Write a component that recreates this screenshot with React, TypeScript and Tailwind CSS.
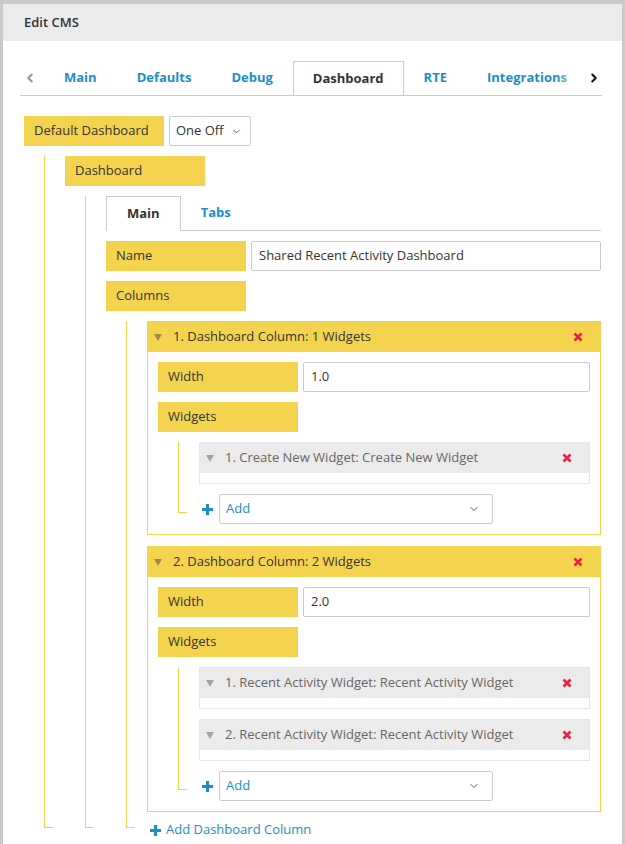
import { ChevronDown, ChevronLeft, ChevronRight } from "lucide-react";
import type { ReactNode } from "react";

const tabs = ["Main", "Defaults", "Debug", "Dashboard", "RTE", "Integrations"];

function Label({ children }: { children: ReactNode }) {
  return (
    <div className="flex h-[30px] w-[140px] shrink-0 items-center bg-[#f4d44f] px-[10px] text-[13px] text-[#333]">
      {children}
    </div>
  );
}

function Branch({ children, last = 12 }: { children: ReactNode; last?: number }) {
  return (
    <div className="mt-[10px] flex">
      <div
        className={
          "ml-[20px] w-[9px] shrink-0 border-b border-l border-[#f4d44f] " +
          (last === 11 ? "mb-[11px]" : "mb-[12px]")
        }
      />
      <div className="ml-[12px] flex min-w-0 flex-1 flex-col">{children}</div>
    </div>
  );
}

function Triangle({ color }: { color: string }) {
  return (
    <svg width="8" height="7" viewBox="0 0 8 7" className="shrink-0">
      <path d="M0 0 H8 L4 7 Z" fill={color} />
    </svg>
  );
}

function RedX() {
  return (
    <svg width="10" height="10" viewBox="0 0 10 10" className="shrink-0">
      <path d="M1.5 1.5 L8.5 8.5 M8.5 1.5 L1.5 8.5" stroke="#ea2143" strokeWidth="2.6" strokeLinecap="butt" />
    </svg>
  );
}

function Plus() {
  return (
    <svg width="11" height="11" viewBox="0 0 11 11" className="ml-[3px] shrink-0">
      <path d="M5.5 0 V11 M0 5.5 H11" stroke="#1e8ec6" strokeWidth="3" />
    </svg>
  );
}

function Input({ value }: { value: string }) {
  return (
    <div className="ml-[5px] flex h-[30px] flex-1 items-center rounded-[2px] border border-[#ccc] bg-white px-[7px] text-[13px] text-[#333]">
      {value}
    </div>
  );
}

function Widget({ title }: { title: string }) {
  return (
    <div className="mb-[10px] border border-[#e6e6e6]">
      <div className="flex h-[30px] items-center bg-[#ebebeb] pl-[6px] pr-[17px] text-[13px] text-[#666]">
        <Triangle color="#a3a3a3" />
        <span className="ml-[11px] flex-1">{title}</span>
        <RedX />
      </div>
      <div className="h-[10px] bg-white" />
    </div>
  );
}

function AddRow() {
  return (
    <div className="flex items-center">
      <Plus />
      <div className="ml-[6px] flex h-[30px] w-[274px] items-center justify-between rounded-[2px] border border-[#ccc] bg-white pl-[6px] pr-[12px] text-[13px] text-[#1e8ec6]">
        <span>Add</span>
        <ChevronDown size={12} strokeWidth={2} className="text-[#555]" />
      </div>
    </div>
  );
}

function Column({ n, width, widgets }: { n: number; width: string; widgets: string[] }) {
  return (
    <div className="mb-[11px] border border-[#f4d44f]">
      <div className="flex h-[30px] items-center bg-[#f4d44f] pl-[6px] pr-[17px] text-[13px] text-[#333]">
        <Triangle color="#9e8d48" />
        <span className="ml-[11px] flex-1">
          {n}. Dashboard Column: {widgets.length} Widgets
        </span>
        <RedX />
      </div>
      <div className="flex flex-col px-[10px] pb-[10px] pt-[10px]">
        <div className="flex">
          <Label>Width</Label>
          <Input value={width} />
        </div>
        <div className="mt-[10px]">
          <Label>Widgets</Label>
        </div>
        <Branch last={11}>
          {widgets.map((w, i) => (
            <Widget key={i} title={`${i + 1}. ${w}`} />
          ))}
          <AddRow />
        </Branch>
      </div>
    </div>
  );
}

export default function App() {
  return (
    <div className="min-h-screen bg-[#c9c9c9] px-[3px] pt-[4px] font-['Open_Sans',sans-serif]">
      <div className="min-h-[840px] bg-white">
        <div className="flex h-[37px] items-center bg-[#ebebeb] px-[21px] text-[13px] font-semibold text-[#333]">
          Edit CMS
        </div>
        <div className="pl-[17px] pr-[20px] pt-[20px]">
          <div className="flex h-[35px] items-stretch border-b border-[#ccc]">
            <div className="flex w-[24px] shrink-0 items-center justify-center pr-[4px]">
              <ChevronLeft size={14} strokeWidth={3.5} className="text-[#999]" />
            </div>
            <div className="relative flex min-w-0 flex-1 overflow-hidden">
              {tabs.map((t) =>
                t === "Dashboard" ? (
                  <div
                    key={t}
                    className="-mb-px flex shrink-0 items-center border border-b-0 border-[#ccc] bg-white px-[19px] text-[13px] font-bold text-[#333]"
                  >
                    {t}
                  </div>
                ) : (
                  <div
                    key={t}
                    className="flex shrink-0 items-center border border-transparent px-[19px] text-[13px] font-bold text-[#1e8ec6]"
                  >
                    {t}
                  </div>
                )
              )}
              <div className="absolute bottom-0 right-0 top-0 w-[30px] bg-gradient-to-r from-transparent to-white" />
            </div>
            <div className="flex w-[16px] shrink-0 items-center justify-center">
              <ChevronRight size={14} strokeWidth={3.5} className="text-[#111]" />
            </div>
          </div>

          <div className="ml-[4px] mr-[1px] mt-[20px] flex flex-col">
            <div className="flex">
              <Label>Default Dashboard</Label>
              <div className="ml-[5px] flex h-[30px] w-[82px] items-center justify-between rounded-[2px] border border-[#ccc] bg-white pl-[6px] pr-[8px] text-[13px] text-[#333]">
                <span>One Off</span>
                <ChevronDown size={11} strokeWidth={2} className="text-[#555]" />
              </div>
            </div>
            <Branch>
              <Label>Dashboard</Label>
              <Branch>
                <div className="flex h-[35px] border-b border-[#ccc]">
                  <div className="-mb-px flex items-center border border-b-0 border-[#ccc] bg-white px-[20px] text-[13px] font-bold text-[#333]">
                    Main
                  </div>
                  <div className="flex items-center px-[20px] text-[13px] font-bold text-[#1e8ec6]">
                    Tabs
                  </div>
                </div>
                <div className="mt-[10px] flex">
                  <Label>Name</Label>
                  <Input value="Shared Recent Activity Dashboard" />
                </div>
                <div className="mt-[10px]">
                  <Label>Columns</Label>
                </div>
                <Branch>
                  <Column n={1} width="1.0" widgets={["Create New Widget: Create New Widget"]} />
                  <Column
                    n={2}
                    width="2.0"
                    widgets={[
                      "Recent Activity Widget: Recent Activity Widget",
                      "Recent Activity Widget: Recent Activity Widget",
                    ]}
                  />
                  <div className="-mt-[3px] flex h-[20px] items-center">
                    <Plus />
                    <span className="ml-[5px] text-[13px] text-[#1e8ec6]">Add Dashboard Column</span>
                  </div>
                </Branch>
              </Branch>
            </Branch>
          </div>
        </div>
      </div>
    </div>
  );
}
